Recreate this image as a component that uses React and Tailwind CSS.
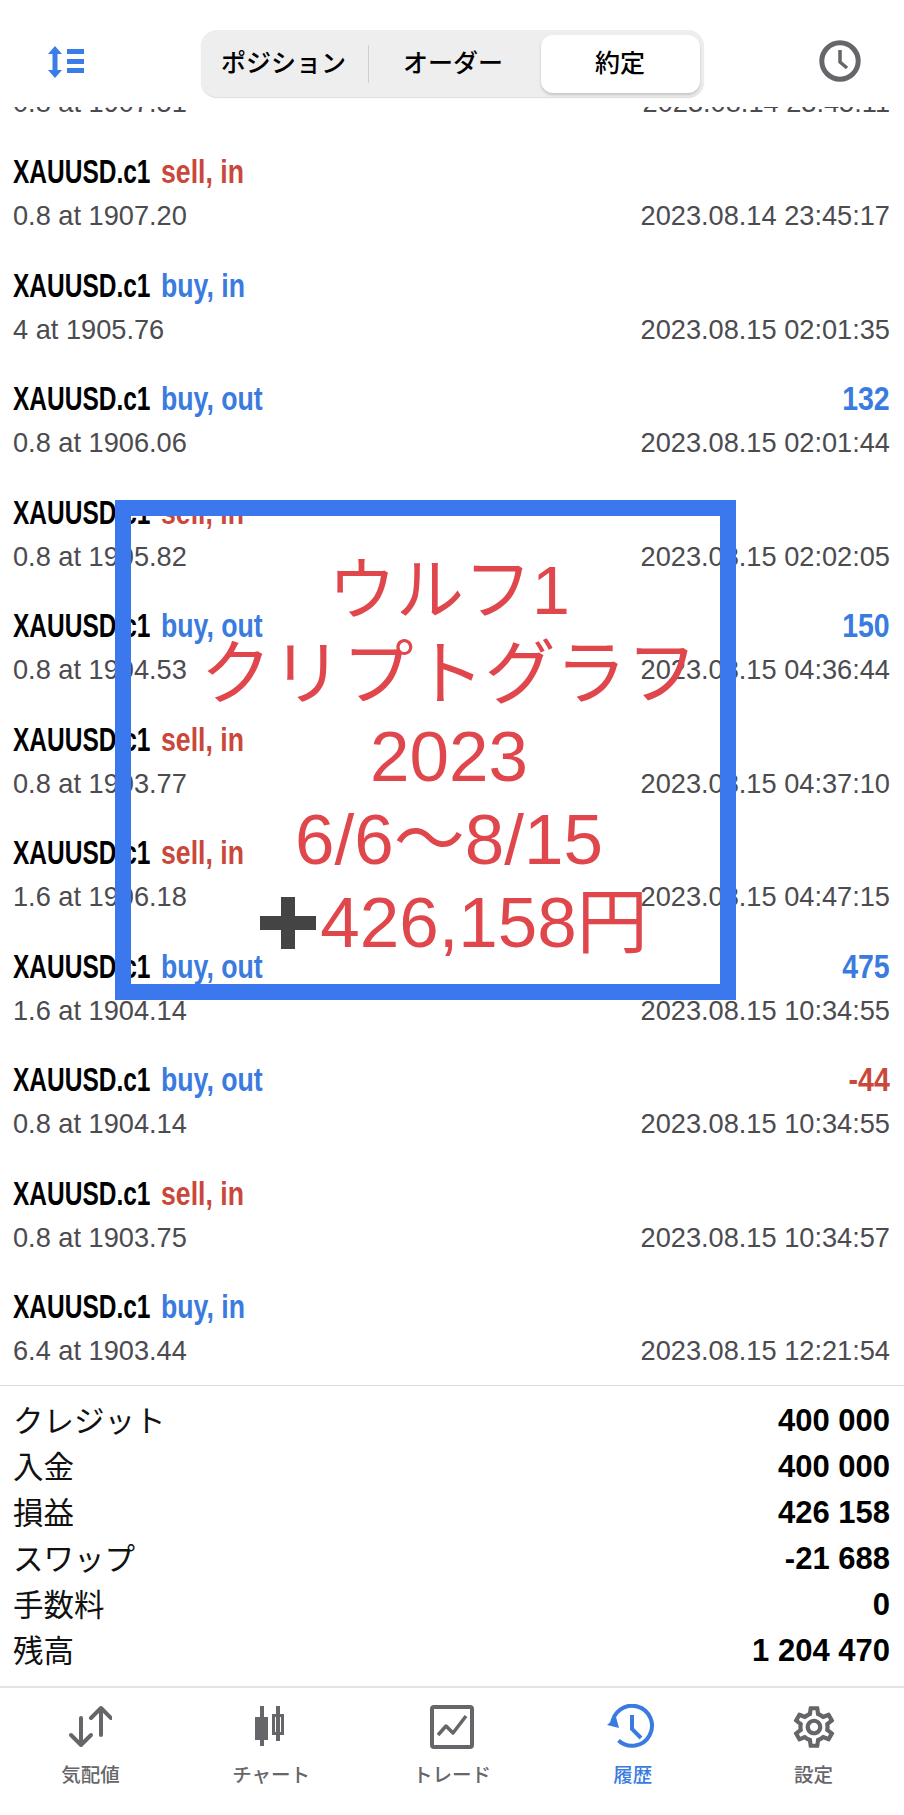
import React from "react";
import { MdOutlineSettings } from "react-icons/md";

const rows = [
  ["sell, in", "0.8 at 1907.51", "2023.08.14 23:45:11", ""],
  ["sell, in", "0.8 at 1907.20", "2023.08.14 23:45:17", ""],
  ["buy, in", "4 at 1905.76", "2023.08.15 02:01:35", ""],
  ["buy, out", "0.8 at 1906.06", "2023.08.15 02:01:44", "132"],
  ["sell, in", "0.8 at 1905.82", "2023.08.15 02:02:05", ""],
  ["buy, out", "0.8 at 1904.53", "2023.08.15 04:36:44", "150"],
  ["sell, in", "0.8 at 1903.77", "2023.08.15 04:37:10", ""],
  ["sell, in", "1.6 at 1906.18", "2023.08.15 04:47:15", ""],
  ["buy, out", "1.6 at 1904.14", "2023.08.15 10:34:55", "475"],
  ["buy, out", "0.8 at 1904.14", "2023.08.15 10:34:55", "-44"],
  ["sell, in", "0.8 at 1903.75", "2023.08.15 10:34:57", ""],
  ["buy, in", "6.4 at 1903.44", "2023.08.15 12:21:54", ""],
];

const summary = [
  ["クレジット", "400 000"],
  ["入金", "400 000"],
  ["損益", "426 158"],
  ["スワップ", "-21 688"],
  ["手数料", "0"],
  ["残高", "1 204 470"],
];

function Row({ side, sub, date, profit }) {
  const sell = side.startsWith("sell");
  const neg = profit.startsWith("-");
  return (
    <div className="h-[113.5px] shrink-0 pl-[13px] pr-[14px] pt-[17px]">
      <div className="flex h-[36px] items-center text-[31px] font-bold leading-[36px]">
        <div className="w-[148px] origin-left scale-x-[0.79] scale-y-[1.08] whitespace-nowrap text-black">XAUUSD.c1</div>
        <div className={"origin-left scale-x-[0.86] scale-y-[1.08] whitespace-nowrap " + (sell ? "text-[#c9483b]" : "text-[#3a7be0]")}>{side}</div>
        {profit && <div className={"ml-auto origin-right scale-x-[0.92] scale-y-[1.08] " + (neg ? "text-[#c9483b]" : "text-[#3a7be0]")}>{profit}</div>}
      </div>
      <div className="mt-[8px] flex h-[36px] items-center justify-between text-[27.2px] leading-[36px] text-[#4b4b50]">
        <span>{sub}</span>
        <span>{date}</span>
      </div>
    </div>
  );
}

function Tab({ label, active, children }) {
  return (
    <div className="flex flex-1 flex-col items-center">
      <div className="flex h-[50px] w-[50px] items-center justify-center">{children}</div>
      <div className={"mt-[9px] text-[19.5px] font-medium leading-[28px] " + (active ? "text-[#3a7be0]" : "text-[#66666a]")}>{label}</div>
    </div>
  );
}

export default function App() {
  return (
    <div className="relative flex h-[1815px] w-[904px] flex-col overflow-hidden bg-white [font-family:'Liberation_Sans','Noto_Sans_CJK_JP',sans-serif]">
      {/* header */}
      <header className="flex h-[107px] shrink-0 items-start justify-between pl-[47px] pr-[43px] pt-[30px]">
        <svg width="38" height="32" viewBox="0 0 38 32" className="mt-[16px]" fill="#3b7de6">
          <path d="M8 0 L15 8 H10.5 V24 H15 L8 32 L1 24 H5.5 V8 H1 Z" />
          <rect x="20" y="3" width="17" height="5" />
          <rect x="20" y="13" width="17" height="5" />
          <rect x="20" y="22" width="17" height="5" />
        </svg>
        <div className="flex h-[67px] w-[503px] items-center rounded-[16px] bg-[#eeeeef] pl-[5px] pr-[4px] shadow-[0_1px_1px_#dcdcdc]">
          <div className="flex h-full w-[162px] items-center justify-center pr-[6px] text-[25px] font-medium leading-none text-black">ポジション</div>
          <div className="h-[38px] w-px bg-[#cfcfd1]" />
          <div className="flex h-full flex-1 items-center justify-center pr-[3px] text-[25px] font-medium leading-none text-black">オーダー</div>
          <div className="flex h-[58px] w-[159px] items-center justify-center rounded-[12px] bg-white text-[25px] font-medium leading-none text-black shadow-[0_2px_3px_rgba(0,0,0,0.18)]">約定</div>
        </div>
        <svg width="42" height="42" viewBox="0 0 42 42" className="mt-[10px]" fill="none" stroke="#66666a" strokeWidth="5">
          <circle cx="21" cy="21" r="18.2" />
          <path d="M21 10 V22 L28 28" strokeWidth="3.5" />
        </svg>
      </header>

      {/* list */}
      <div className="h-[1278px] shrink-0 overflow-hidden">
        <div className="mt-[-83.5px] flex flex-col">
          {rows.map((r, i) => (
            <Row key={i} side={r[0]} sub={r[1]} date={r[2]} profit={r[3]} />
          ))}
        </div>
      </div>

      {/* summary */}
      <div className="h-[301px] shrink-0 border-t border-[#dddddd] pb-[11px] pl-[13px] pr-[14px] pt-[12px]">
        {summary.map(([k, v]) => (
          <div key={k} className="flex h-[46px] items-center justify-between leading-[46px]">
            <span className="text-[30.5px] text-[#111111]">{k}</span>
            <span className="text-[31px] font-bold text-black">{v}</span>
          </div>
        ))}
      </div>

      {/* tabs */}
      <nav className="flex h-[129px] shrink-0 border-t-2 border-[#e4e4e4] pt-[14px]">
        <Tab label="気配値">
          <svg width="44" height="44" viewBox="0 0 44 44" fill="none" stroke="#66666a" strokeWidth="4" strokeLinecap="round" strokeLinejoin="round">
            <path d="M13 13 V40 M3 30 L13 40 L23 30" />
            <path d="M33 30 V3 M23 13 L33 3 L43 13" />
          </svg>
        </Tab>
        <Tab label="チャート">
          <svg width="32" height="42" viewBox="0 0 32 42" fill="#66666a">
            <rect x="5" y="0" width="4" height="40" />
            <rect x="0" y="11" width="13" height="23" />
            <rect x="21" y="0" width="4" height="35" />
            <path fillRule="evenodd" d="M17 8 H29 V29 H17 Z M20 11 V26 H26 V11 Z" />
          </svg>
        </Tab>
        <Tab label="トレード">
          <svg width="44" height="44" viewBox="0 0 44 44" fill="none" stroke="#66666a">
            <rect x="2" y="2" width="40" height="40" rx="2" strokeWidth="4" />
            <path d="M8 30 L16 21 L23 28 L36 11" strokeWidth="3.5" strokeLinejoin="round" />
          </svg>
        </Tab>
        <Tab label="履歴" active>
          <svg width="48" height="46" viewBox="0 0 48 46" fill="none" stroke="#3a7be0" strokeWidth="4" className="ml-[-3px]">
            <path d="M5 21 A20 20 0 1 1 11.5 36.5" />
            <path d="M0 21 L12 24 L9 13 Z" fill="#3a7be0" stroke="none" />
            <path d="M25 11 V25 L34 34" />
          </svg>
        </Tab>
        <Tab label="設定">
          <MdOutlineSettings size={52} color="#66666a" />
        </Tab>
      </nav>

      {/* overlay */}
      <div className="absolute left-[115px] top-[500px] h-[500px] w-[621px] border-[16px] border-[#3b78ee]" />
      <div className="absolute left-[149px] top-[549px] w-[600px] text-center text-[71px] leading-[83px] text-[#e0474d]">
        <div className="text-[68px]">ウルフ1</div>
        <div className="whitespace-nowrap">クリプトグラフ</div>
        <div>2023</div>
        <div>6/6〜8/15</div>
        <div className="ml-[10px] flex items-center justify-center whitespace-nowrap">
          <svg width="56" height="56" viewBox="0 0 56 56" fill="#444444" className="mr-[4px]">
            <path d="M21 2 H35 V21 H56 V35 H35 V54 H21 V35 H0 V21 H21 Z" />
          </svg>
          426,158円
        </div>
      </div>
    </div>
  );
}
